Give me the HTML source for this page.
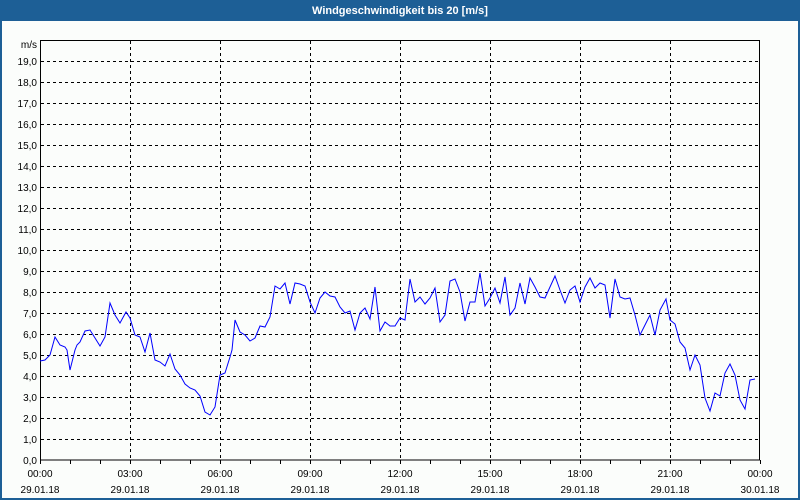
<!DOCTYPE html>
<html><head><meta charset="utf-8"><style>
html,body{margin:0;padding:0;width:800px;height:500px;overflow:hidden;background:#fbfdfb}
svg{display:block}
text{font-family:"Liberation Sans",sans-serif;font-size:10px;fill:#000}
</style></head><body>
<svg width="800" height="500" viewBox="0 0 800 500" xmlns="http://www.w3.org/2000/svg">
<rect x="0" y="0" width="800" height="500" fill="#fbfdfb"/>
<rect x="0" y="0" width="800" height="21" fill="#1d5f96"/>
<rect x="0" y="0" width="2" height="500" fill="#1d5f96"/>
<rect x="798" y="0" width="2" height="500" fill="#1d5f96"/>
<rect x="0" y="498" width="800" height="2" fill="#1d5f96"/>
<text x="400" y="14" text-anchor="middle" style="font-weight:bold;fill:#fff;font-size:11px">Windgeschwindigkeit bis 20 [m/s]</text>
<g stroke="#000" stroke-width="1" stroke-dasharray="3,3" shape-rendering="crispEdges">
<path d="M41 61.5H760M41 82.5H760M41 103.5H760M41 124.5H760M41 145.5H760M41 166.5H760M41 187.5H760M41 208.5H760M41 229.5H760M41 250.5H760M41 271.5H760M41 292.5H760M41 313.5H760M41 334.5H760M41 355.5H760M41 376.5H760M41 397.5H760M41 418.5H760M41 439.5H760"/>
<path d="M130.5 41V460M220.5 41V460M310.5 41V460M400.5 41V460M490.5 41V460M580.5 41V460M670.5 41V460"/>
</g>
<g stroke="#000" stroke-width="1" fill="none" shape-rendering="crispEdges">
<rect x="40.5" y="40.5" width="719" height="419.5"/>
<path d="M40.5 460v4M70.5 460v4M100.5 460v4M130.5 460v4M160.5 460v4M190.5 460v4M220.5 460v4M250.5 460v4M280.5 460v4M310.5 460v4M340.5 460v4M370.5 460v4M400.5 460v4M430.5 460v4M460.5 460v4M490.5 460v4M520.5 460v4M550.5 460v4M580.5 460v4M610.5 460v4M640.5 460v4M670.5 460v4M700.5 460v4M730.5 460v4M760.5 460v4"/>
</g>
<polyline fill="none" stroke="#0000ff" stroke-width="1" points="40,361 45,360 50,355 55,337 60,345 65,347 67,350 70,370 75,350 77,345 80,342 85,331 90,330 95,338 100,346 105,337 110,303 115,315 120,323 126,312 130,318 135,335 140,337 145,352 150,333 155,360 160,362 165,366 170,354 175,369 180,375 185,384 190,388 195,390 200,396 205,412 210,415 215,407 220,375 225,373 230,357 232,350 235,320 240,332 245,335 250,341 255,338 260,326 265,327 270,317 275,286 280,289 285,283 290,304 295,283 300,284 305,286 310,302 315,313 320,298 325,292 330,296 335,297 340,307 345,313 350,311 355,330 360,313 365,308 370,319 375,287 380,331 385,322 390,326 395,326 400,318 405,320 410,279 415,302 420,297 425,304 430,298 435,288 440,322 445,315 450,281 455,279 460,292 465,321 470,302 475,302 480,273 485,306 490,298 495,288 500,303 505,277 510,315 515,308 520,283 525,304 530,278 535,287 540,297 545,298 550,287 555,276 560,290 565,303 570,290 575,286 580,302 585,287 590,278 595,288 600,283 605,285 610,318 615,279 620,297 625,299 630,298 635,315 640,335 645,325 650,315 655,335 660,310 666,299 670,320 675,324 680,342 685,348 690,370 695,355 700,365 705,398 710,411 715,393 720,396 725,373 730,364 735,375 740,400 745,409 750,380 755,379"/>
<g text-anchor="end">
<text x="37" y="48">m/s</text>
<text x="37" y="65">19,0</text><text x="37" y="86">18,0</text><text x="37" y="107">17,0</text><text x="37" y="128">16,0</text><text x="37" y="149">15,0</text><text x="37" y="170">14,0</text><text x="37" y="191">13,0</text><text x="37" y="212">12,0</text><text x="37" y="233">11,0</text><text x="37" y="254">10,0</text><text x="37" y="275">9,0</text><text x="37" y="296">8,0</text><text x="37" y="317">7,0</text><text x="37" y="338">6,0</text><text x="37" y="359">5,0</text><text x="37" y="380">4,0</text><text x="37" y="401">3,0</text><text x="37" y="422">2,0</text><text x="37" y="443">1,0</text><text x="37" y="464">0,0</text>
</g>
<g text-anchor="middle">
<text x="40" y="477">00:00</text><text x="130" y="477">03:00</text><text x="220" y="477">06:00</text><text x="310" y="477">09:00</text><text x="400" y="477">12:00</text><text x="490" y="477">15:00</text><text x="580" y="477">18:00</text><text x="670" y="477">21:00</text><text x="760" y="477">00:00</text>
<text x="40" y="493">29.01.18</text><text x="130" y="493">29.01.18</text><text x="220" y="493">29.01.18</text><text x="310" y="493">29.01.18</text><text x="400" y="493">29.01.18</text><text x="490" y="493">29.01.18</text><text x="580" y="493">29.01.18</text><text x="670" y="493">29.01.18</text><text x="760" y="493">30.01.18</text>
</g>
</svg>
</body></html>
